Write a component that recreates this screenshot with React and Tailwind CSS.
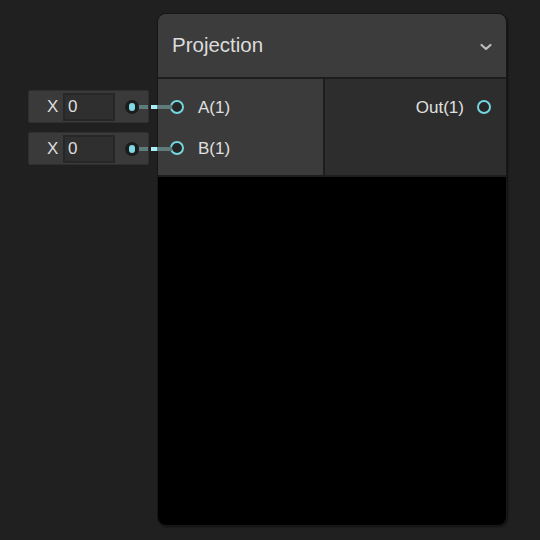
import React from "react";

const font = { fontFamily: '"Liberation Sans", Arial, sans-serif' };

function InputBox({ top }) {
  return (
    <div
      className="absolute left-[28px] w-[121px] h-[33px] bg-[#3a3a3a] border border-[#2f2f2f] rounded-[2px] flex items-center"
      style={{ top }}
    >
      <span className="ml-[18px] w-[16px] text-[17px] text-[#dedede] leading-none">X</span>
      <div className="w-[52px] h-[28px] bg-[#2f2f2f] border-2 border-[#272727] flex items-center pl-[3px] text-[17px] text-[#dedede] leading-none">
        0
      </div>
      <div className="ml-[10px] w-[14px] h-[14px] rounded-full bg-[#1c1c1c] flex items-center justify-center">
        <div className="w-[6px] h-[8px] rounded-full bg-[#7fdbe3]" />
      </div>
      <div className="flex-1 h-[4px] bg-[#5f7b7c]" />
    </div>
  );
}

function Wire({ top }) {
  return (
    <div className="absolute left-[149px] w-[23px] h-[4px] flex" style={{ top }}>
      <div className="w-[2px] h-full" />
      <div className="w-[6px] h-full bg-[#a9eef4]" />
      <div className="flex-1 h-full bg-[#5f7b7c]" />
    </div>
  );
}

function PortRing() {
  return <div className="w-[14px] h-[14px] rounded-full border-[2.5px] border-[#74d6de] bg-[#262626] shrink-0" />;
}

export default function App() {
  return (
    <div className="relative w-[540px] h-[540px] bg-[#202020] overflow-hidden" style={font}>
      <InputBox top={90} />
      <InputBox top={132} />
      <div className="absolute left-[157px] top-[13px] w-[350px] h-[513px] rounded-[9px] border border-[#171717] bg-[#1d1d1d] overflow-hidden flex flex-col gap-[2px] shadow-[1px_1px_2px_rgba(0,0,0,0.5)]">
        <div className="h-[63px] shrink-0 bg-[#3c3c3c] flex items-center justify-between pl-[14px] pr-[13px]">
          <span className="text-[20.5px] text-[#dcdcdc] leading-none">Projection</span>
          <svg width="14" height="10" viewBox="0 0 14 10" className="mt-[2px]">
            <path d="M2.5 3 L7 7 L11.5 3" fill="none" stroke="#bdbdbd" strokeWidth="2.2" strokeLinecap="round" strokeLinejoin="round" />
          </svg>
        </div>
        <div className="h-[96px] shrink-0 flex gap-[2px]">
          <div className="w-[165px] bg-[#3b3b3b] flex flex-col pt-[21px] gap-[27px]">
            <div className="flex items-center h-[14px] pl-[12px] gap-[14px]">
              <PortRing />
              <span className="text-[17px] text-[#e0e0e0] leading-none">A(1)</span>
            </div>
            <div className="flex items-center h-[14px] pl-[12px] gap-[14px]">
              <PortRing />
              <span className="text-[17px] text-[#e0e0e0] leading-none">B(1)</span>
            </div>
          </div>
          <div className="flex-1 bg-[#2d2d2d] flex flex-col pt-[21px]">
            <div className="flex items-center justify-end h-[14px] pr-[15px] gap-[13px]">
              <span className="text-[17px] text-[#e0e0e0] leading-none">Out(1)</span>
              <PortRing />
            </div>
          </div>
        </div>
        <div className="flex-1 bg-black" />
      </div>
      <Wire top={105} />
      <Wire top={147} />
    </div>
  );
}
